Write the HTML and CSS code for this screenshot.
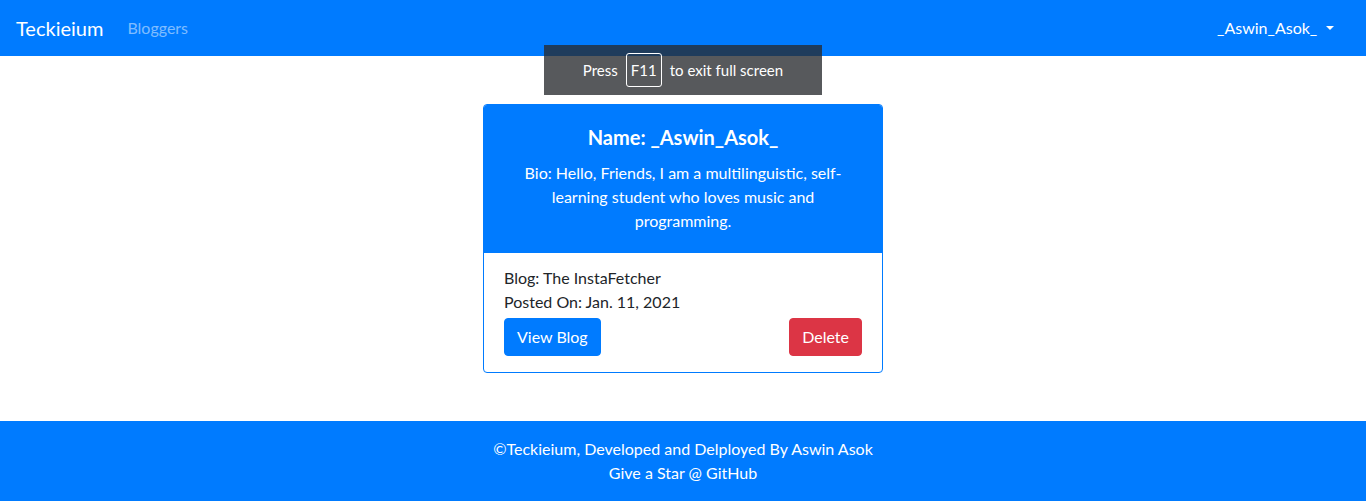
FILE: index.html
```html
<!DOCTYPE html>
<html lang="en">
<head>
<meta charset="utf-8">
<title>Teckieium</title>
<link rel="stylesheet" href="styles.css">
</head>
<body>
<nav class="navbar">
  <a class="brand" href="#">Teckieium</a>
  <a class="nav-link muted" href="#">Bloggers</a>
  <div class="spacer"></div>
  <a class="nav-link user dropdown-toggle" href="#">_Aswin_Asok_</a>
</nav>

<main class="main">
  <div class="card">
    <div class="card-head">
      <h5 class="card-title">Name: _Aswin_Asok_</h5>
      <p class="card-text">Bio: Hello, Friends, I am a multilinguistic, self-learning student who loves music and programming.</p>
    </div>
    <div class="card-body">
      <p class="line">Blog: The InstaFetcher</p>
      <p class="line">Posted On: Jan. 11, 2021</p>
      <div class="actions">
        <a class="btn btn-primary" href="#">View Blog</a>
        <a class="btn btn-danger" href="#">Delete</a>
      </div>
    </div>
  </div>
</main>

<footer class="footer">
  <p>©Teckieium, Developed and Delployed By Aswin Asok</p>
  <p>Give a Star @ GitHub</p>
</footer>

<div class="fs-toast">Press <span class="key">F11</span> to exit full screen</div>
</body>
</html>
```

FILE: styles.css
```css
* { box-sizing: border-box; }
html, body { margin: 0; padding: 0; }
body {
  font-family: "Lato", "Liberation Sans", sans-serif;
  font-size: 16px;
  line-height: 1.5;
  color: #212529;
  background: #fff;
}
a { text-decoration: none; }

.navbar {
  height: 56px;
  background: #007bff;
  display: flex;
  align-items: center;
  padding: 0 16px;
}
.brand {
  color: #fff;
  font-size: 20px;
  line-height: 30px;
  margin-right: 16px;
}
.nav-link {
  padding: 8px;
  color: #fff;
  line-height: 24px;
}
.nav-link.muted { color: rgba(255, 255, 255, 0.5); }
.spacer { flex: 1; }
.user { margin-right: 8px; }
.dropdown-toggle::after {
  content: "";
  display: inline-block;
  margin-left: 0.55em;
  vertical-align: 0.255em;
  border-top: 0.3em solid #fff;
  border-right: 0.3em solid transparent;
  border-left: 0.3em solid transparent;
  border-bottom: 0;
}

.main {
  display: flex;
  justify-content: center;
  padding: 48px 0;
}
.card {
  width: 400px;
  border: 1px solid #007bff;
  border-radius: 4px;
  overflow: hidden;
}
.card-head {
  background: #007bff;
  color: #fff;
  text-align: center;
  padding: 20px;
}
.card-title {
  margin: 0 0 12px;
  font-size: 20px;
  font-weight: 700;
  line-height: 24px;
}
.card-text { margin: 0; }
.card-body {
  padding: 13px 20px 16px;
}
.line { margin: 0; }
.actions {
  display: flex;
  justify-content: space-between;
  margin-top: 4px;
}
.btn {
  display: inline-block;
  color: #fff;
  padding: 6px 12px;
  line-height: 24px;
  border: 1px solid transparent;
  border-radius: 4px;
}
.btn-primary { background: #007bff; border-color: #007bff; }
.btn-danger { background: #dc3545; border-color: #dc3545; }

.footer {
  background: #007bff;
  color: #fff;
  text-align: center;
  padding: 16px 0;
}
.footer p { margin: 0; }

.fs-toast {
  position: absolute;
  left: 544px;
  top: 45px;
  width: 278px;
  height: 50px;
  background: rgba(40, 42, 46, 0.78);
  color: #fff;
  font-size: 15px;
  display: flex;
  align-items: center;
  justify-content: center;
  gap: 8px;
}
.key {
  display: inline-flex;
  align-items: center;
  justify-content: center;
  width: 36px;
  height: 34px;
  border: 1px solid #fff;
  border-radius: 3px;
}
```
